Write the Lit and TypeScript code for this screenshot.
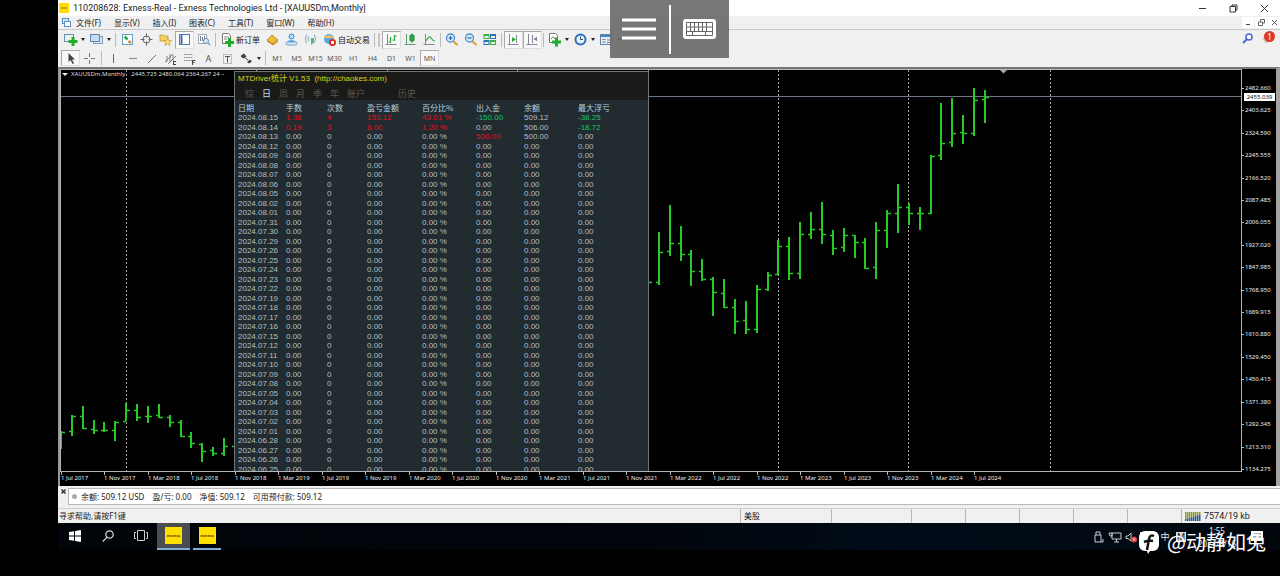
import { LitElement, html, svg, css } from "lit";
import { customElement } from "lit/decorators.js";
import { classMap } from "lit/directives/class-map.js";

type Icon = ReturnType<typeof svg>;

const GREEN = "#2fa84a";

const glyph: Record<string, Icon> = {
  newChart: svg`<rect x="1.500" y="2.500" width="9" height="7" fill="#e8f2e8" stroke="#6a8fb0"/><path d="M10 5v9M5.500 9.500h9" stroke="#1eae2c" stroke-width="3"/>`,
  profiles: svg`<rect x="4.500" y="4.500" width="9" height="7" fill="#dbe9f7" stroke="#7f9fbe"/><rect x="1.500" y="2.500" width="9" height="7" fill="#c5dcf2" stroke="#5d8ab5"/>`,
  market: svg`<rect x="2.500" y="2.500" width="10" height="10" fill="#fff" stroke="#6aa0cc"/><path d="M4.500 4.500l3 3" stroke="#2fa84a" stroke-width="2.500"/><path d="M8.500 9l2.500 2" stroke="#e08a2c" stroke-width="2.500"/>`,
  target: svg`<circle cx="7.500" cy="7.500" r="3.500" fill="none" stroke="#666"/><path d="M7.500 1.500v4M7.500 9.500v4M1.500 7.500h4M9.500 7.500h4" stroke="#666"/>`,
  folders: svg`<path d="M2 3h3l1 1h4v5H2z" fill="#f5d55a" stroke="#b99a3a" stroke-width=".8"/><path d="M9.500 6l1.200 2.400 2.800.3-2 1.900.5 2.700-2.500-1.300-2.500 1.300.5-2.700-2-1.900 2.800-.3z" fill="#ffe168" stroke="#c09530" stroke-width=".7"/>`,
  navigator: svg`<rect x="2.500" y="2.500" width="10" height="10" fill="#fff" stroke="#4f7db8"/><path d="M4.500 3v9" stroke="#3a6cae" stroke-width="2"/>`,
  tester: svg`<rect x="2.500" y="2.500" width="8" height="9" fill="#fff" stroke="#9ab"/><path d="M4.500 4v5M6.500 5v4M8.500 4v4" stroke="#778"/><circle cx="10" cy="9" r="2.500" fill="#d8ecf8" stroke="#6d95b5"/><path d="M12 11l2 2" stroke="#6d95b5" stroke-width="1.500"/>`,
  order: svg`<path d="M2.500 1.500h6l2 2v8h-8z" fill="#fff" stroke="#777"/><path d="M4 5h5M4 7h3" stroke="#888"/><path d="M9.500 6v9M5 10.500h9" stroke="#1eae2c" stroke-width="3"/>`,
  gold: svg`<path d="M2 8l5-5 6 5-5 4z" fill="#efbd3a" stroke="#b5811c" stroke-width=".8"/><path d="M2 8v1.500l6 4V12zM8 12l5-4v1.500l-5 4z" fill="#c58d20"/>`,
  cloud: svg`<circle cx="7.500" cy="4.500" r="2.500" fill="#b9e0ff" stroke="#2a8ad6"/><path d="M3 11c0-4 9-4 9 0z" fill="#58aef0"/><rect x="2" y="10" width="11" height="3" rx="1.500" fill="#dceaf6" stroke="#5a8cc0" stroke-width=".8"/>`,
  signal: svg`<path d="M4 3a6 6 0 0 0 0 8M11 3a6 6 0 0 1 0 8M6 5a3 3 0 0 0 0 4" fill="none" stroke="#86b7d4" stroke-width="1.200"/><path d="M8 6v7q4-2 3-7z" fill="#62b56c"/>`,
  auto: svg`<circle cx="7" cy="7" r="5" fill="#5aa9df"/><path d="M2 6q5-6 10 0z" fill="#efc35a"/><circle cx="10.500" cy="10.500" r="3.500" fill="#d9281d"/><rect x="9" y="9" width="3" height="3" fill="#fff"/>`,
  bars: svg`<path d="M3.500 2v11M1.500 12.500h11" stroke="#889" /><path d="M6.500 5v6M6.500 10h-2M10.500 3v6M10.500 4h2M10.500 8h-2" stroke="${GREEN}" stroke-width="1.200"/>`,
  candles: svg`<path d="M3.500 2v11M1.500 12.500h11M9 1v10" stroke="#697"/><rect x="7" y="3" width="4" height="6" rx="1" fill="#22b344" stroke="#187d30"/>`,
  line: svg`<path d="M3.500 2v11M1.500 12.500h11" stroke="#889"/><path d="M4 9q3-6 5-3t4 3" fill="none" stroke="${GREEN}" stroke-width="1.200"/>`,
  zoomIn: svg`<path d="M9 9l4.500 4" stroke="#d8a630" stroke-width="2.200"/><circle cx="6.500" cy="6" r="4" fill="#d6ecfb" stroke="#4e90c8" stroke-width="1.300"/><path d="M4.500 6h4M6.500 4v4" stroke="#2767a5" stroke-width="1.200"/>`,
  zoomOut: svg`<path d="M9 9l4.500 4" stroke="#d8a630" stroke-width="2.200"/><circle cx="6.500" cy="6" r="4" fill="#d6ecfb" stroke="#4e90c8" stroke-width="1.300"/><path d="M4.500 6h4" stroke="#2767a5" stroke-width="1.200"/>`,
  tile: svg`<rect x="1.500" y="2" width="6" height="5" fill="#3fae49"/><rect x="8" y="2" width="6" height="5" fill="#2f6cc4"/><rect x="1.500" y="8" width="6" height="5" fill="#2f6cc4"/><rect x="8" y="8" width="6" height="5" fill="#3fae49"/><path d="M2.500 5h4M9 5h4M2.500 11h4M9 11h4" stroke="#e8f4d8" stroke-width="2"/>`,
  scroll: svg`<path d="M3.500 2v11M1.500 12.500h11" stroke="#889"/><path d="M10.500 3v8" stroke="#889"/><path d="M6 5l4 2.500L6 10z" fill="#27ab3d"/>`,
  shift: svg`<path d="M3.500 2v11M1.500 12.500h11M7.500 3v8" stroke="#889"/><path d="M12 5L8.500 7 12 9z" fill="#778"/>`,
  indicator: svg`<path d="M2.500 1.500h6l2 2v7h-8z" fill="#fff" stroke="#777"/><path d="M4 7q2-4 4 0" fill="none" stroke="#777"/><path d="M9.500 5.500v9M5 10h9" stroke="#1eae2c" stroke-width="3"/>`,
  clock: svg`<circle cx="7.500" cy="7.500" r="5" fill="#e4f1fc" stroke="#2d6dba" stroke-width="2"/><path d="M7.500 4.500v3h2.500" fill="none" stroke="#345"/>`,
  template: svg`<rect x="1.500" y="2.500" width="11" height="10" fill="#e4edf4" stroke="#5d86a8"/><path d="M2 4h10" stroke="#4684c4" stroke-width="2"/><path d="M3.500 7.500h3M3.500 10h3M8 8h3.500M8 10.500h3" stroke="#779"/>`,
  cursor: svg`<path d="M5.500 2v9l2-2 2 4 1.500-.8-2-3.700h3z" fill="#444"/>`,
  cross: svg`<path d="M7.500 2v4M7.500 9v4M2 7.500h4M9 7.500h4" stroke="#777"/>`,
  vline: svg`<path d="M7.500 3v9" stroke="#666"/>`,
  hline: svg`<path d="M4 7.500h8" stroke="#888"/>`,
  trend: svg`<path d="M4 12l8-8" stroke="#777"/>`,
  channel: svg`<path d="M2 11l8-8M5 13l8-8M4 5v6M7 3v8M10 4v6" stroke="#777" stroke-width=".9"/><path d="M10 10.500h3M10 13.500h3M10.500 10v4" stroke="#444"/>`,
  fibo: svg`<path d="M2 3.500h9M2 6.500h9M2 9.500h9" stroke="#888" stroke-dasharray="1.500 .7"/><path d="M10.500 9v5M10.500 9.500h3M10.500 11.500h2" stroke="#444"/>`,
  label: svg`<rect x="3.500" y="3.500" width="8" height="9" fill="none" stroke="#888" stroke-dasharray="1 1"/><path d="M5 5.500h5M7.500 5.500v6" stroke="#555"/>`,
  arrows: svg`<path d="M2 5l3-2 2 2.500-3 1.500zM5 6l4 3" fill="#444" stroke="#444"/><path d="M8 11l3-2.500 2 2-3 2z" fill="#444"/>`,
};

const icon = (name: string) =>
  html`<svg class="ico" viewBox="0 0 15 15" aria-hidden="true">${glyph[name]}</svg>`;

/* Each bar: [index, high, low, open, close] in plot pixels. */
const BARS: number[][] = [
  [0, 431, 449, 432, 432], [1, 415, 436, 431, 416], [2, 406, 429, 416, 428], [3, 420, 434, 429, 430],
  [4, 422, 432, 430, 430], [5, 421, 441, 430, 422], [6, 403, 421, 421, 410], [7, 404, 421, 410, 417],
  [8, 406, 423, 416, 416], [9, 404, 418, 415, 417], [10, 415, 427, 417, 422], [11, 420, 437, 422, 436],
  [12, 432, 448, 436, 443], [13, 443, 462, 444, 451], [14, 447, 456, 450, 453], [15, 438, 456, 453, 446],
  [16, 440, 452, 446, 446], [54, 270, 284, 281, 282], [55, 232, 285, 282, 252], [56, 205, 256, 251, 243],
  [57, 226, 261, 243, 254], [58, 250, 286, 254, 271], [59, 259, 281, 271, 279], [60, 277, 316, 279, 292],
  [61, 279, 308, 293, 307], [62, 299, 334, 307, 321], [63, 301, 334, 320, 329], [64, 285, 333, 329, 289],
  [65, 272, 291, 289, 275], [66, 240, 275, 274, 246], [67, 237, 280, 246, 273], [68, 222, 279, 273, 234],
  [69, 212, 239, 234, 229], [70, 202, 244, 229, 234], [71, 230, 255, 235, 248], [72, 228, 252, 247, 235],
  [73, 235, 258, 235, 242], [74, 238, 269, 242, 268], [75, 222, 279, 267, 230], [76, 210, 248, 230, 213],
  [77, 184, 233, 213, 207], [78, 203, 225, 207, 213], [79, 207, 230, 213, 213], [80, 155, 214, 213, 156],
  [81, 103, 160, 155, 143], [82, 98, 147, 142, 133], [83, 115, 144, 132, 133], [84, 88, 136, 133, 100],
  [85, 90, 123, 99, 97],
];
const barX = (i: number) => Math.round(i * 10.87);
const PLOT_TOP = 70;

const PRICES = ["2482.660", "2403.625", "2324.590", "2245.555", "2166.520", "2087.485", "2006.055", "1927.020", "1847.985",
  "1768.950", "1689.915", "1610.880", "1529.450", "1450.415", "1371.380", "1292.345", "1213.310", "1134.275"];

const MONTHS = ["Jul", "Nov", "Mar"];
const DATES = Array.from({ length: 22 }, (_, i) => `1 ${MONTHS[i % 3]} ${2017 + Math.floor((i + 1) / 3)}`);

const DAYS = ("08.15 08.14 08.13 08.12 08.09 08.08 08.07 08.06 08.05 08.02 08.01 07.31 07.30 07.29 07.26 07.25 07.24 07.23 " +
  "07.22 07.19 07.18 07.17 07.16 07.15 07.12 07.11 07.10 07.09 07.08 07.05 07.04 07.03 07.02 07.01 06.28 06.27 06.26 06.25").split(" ");
const ACTIVE: Record<string, string[]> = {
  "08.15": ["1.36", "4", "153.12", "43.01 %", "-150.00", "509.12", "-38.25"],
  "08.14": ["0.19", "3", "6.00", "1.20 %", "0.00", "506.00", "-18.72"],
  "08.13": ["0.00", "0", "0.00", "0.00 %", "500.00", "500.00", "0.00"],
};
const IDLE = ["0.00", "0", "0.00", "0.00 %", "0.00", "0.00", "0.00"];
const tone = (value: string, col: number) => ({
  loss: value.startsWith("-"),
  gain: !value.startsWith("-") && parseFloat(value) !== 0 && col !== 5,
});

@customElement("stats-panel")
export class StatsPanel extends LitElement {
  static styles = css`
    :host { display: block; background: #212b30; border: 1px solid #6d777b; border-bottom: 0; overflow: hidden; box-sizing: border-box;
      font: 8px/9px "Liberation Sans", "Noto Sans CJK SC", sans-serif; color: #b4bfc4; }
    .head { background: #1a1b18; height: 28px; }
    .title { margin: 0; padding: 2px 3px 0; font: inherit; line-height: 10px; color: #d3d31c; }
    .tabs { display: flex; gap: 8px; padding: 5px 10px 0; }
    .tab { border: 0; padding: 0; background: none; font: 9px/10px "Noto Sans CJK SC", sans-serif; color: #55574f; }
    .on { color: #b8dcf0; }
    .history { margin-left: 25px; }
    table { width: 413px; table-layout: fixed; border-collapse: collapse; margin-top: 3px; }
    th, td { box-sizing: border-box; padding: 0 0 0 3px; text-align: left; font-weight: 400; white-space: nowrap; }
    th { height: 10px; font: 8px/10px "Noto Sans CJK SC", sans-serif; color: #b5cfdc; }
    td { height: 9px; line-height: 9px; }
    tbody tr:nth-child(even) td { height: 10px; }
    .gain { color: #e0101c; }
    .loss { color: #12c765; }
    .c1 { width: 48px; } .c2 { width: 41px; } .c3 { width: 40px; } .c4 { width: 55px; }
    .c5 { width: 54px; } .c6 { width: 48px; } .c7 { width: 54px; }
  `;
  render() {
    const tabs = ["综", "日", "周", "月", "季", "年", "账户", "历史"];
    const heads = ["日期", "手数", "次数", "盈亏金额", "百分比%", "出入金", "余额", "最大浮亏"];
    return html`
      <div class="head">
        <h2 class="title">MTDriver统计 V1.53&nbsp; (http://chaokes.com)</h2>
        <div class="tabs">
          ${tabs.map((t, i) => html`<button class=${classMap({ tab: true, on: i === 1, history: i === 7 })}>${t}</button>`)}
        </div>
      </div>
      <table>
        <thead><tr>${heads.map((h, i) => html`<th scope="col" class="c${i + 1}">${h}</th>`)}</tr></thead>
        <tbody>
          ${DAYS.map((d) => html`<tr><td>2024.${d}</td>${(ACTIVE[d] ?? IDLE).map((v, i) => html`<td class=${classMap(tone(v, i))}>${v}</td>`)}</tr>`)}
        </tbody>
      </table>`;
  }
}

@customElement("price-chart")
export class PriceChart extends LitElement {
  static styles = css`
    :host { display: grid; grid-template-columns: 1fr 34px; grid-template-rows: 403px 14px; position: relative;
      background: #000; color: #ddd; font: 6px/9px "Noto Sans", sans-serif;
      border: solid #777; border-width: 2px 4px 0 2px; border-right-color: #a2a2a2; border-left-color: #999; }
    .plot { position: relative; min-width: 0; overflow: hidden; border: 1px solid #b4b4b4; }
    .canvas { display: block; width: 100%; height: 401px; }
    .caption { position: absolute; left: 1px; top: 0; display: flex; gap: 3px; align-items: center; white-space: nowrap; }
    .tri { width: 0; border: 3px solid transparent; border-top-color: #eee; border-bottom: 0; }
    .caption b { font-weight: 400; margin-right: 3px; }
    .panel { position: absolute; left: 173px; top: 1px; width: 415px; height: 400px; }
    .time { grid-column: 1; width: 100%; height: 14px; overflow: visible; }
    .time text { fill: #eee; }
    .prices { grid-column: 2; grid-row: 1 / 3; display: flex; flex-direction: column; justify-content: space-between;
      padding: 15px 0 12px; color: #eee; }
    .price { display: flex; align-items: center; gap: 1px; }
    .price::before { content: ""; width: 2px; height: 1px; background: #bbb; }
    .now { position: absolute; right: 1px; top: 24px; width: 31px; line-height: 8px; text-align: center; background: #fff; color: #111; }
  `;
  render() {
    return html`
      <div class="plot">
        <svg class="canvas" role="img" aria-label="XAUUSDm monthly bars">
          ${[65, 195, 326, 456, 587, 717, 847, 989].map((x) => svg`<line x1=${x + 0.5} x2=${x + 0.5} y1="0" y2="401" stroke="#aaa" stroke-dasharray="2 2"/>`)}
          <line x1="0" x2="100%" y1="26.5" y2="26.5" stroke="#6f7786"/>
          <path d="M939 0h7l-3.500 3.500z" fill="#aaa"/>
          ${BARS.map(([i, h, l, o, c]) => {
            const x = barX(i);
            return svg`<path d="M${x} ${h - PLOT_TOP}V${l - PLOT_TOP}" stroke="#28c828" stroke-width="2"/><path d="M${x - 3} ${o - PLOT_TOP + 0.5}H${x}M${x} ${c - PLOT_TOP + 0.5}H${x + 4}" stroke="#28c828" stroke-width="1.500"/>`;
          })}
        </svg>
        <div class="caption"><span class="tri"></span><b>XAUUSDm,Monthly</b><span>2445.725 2480.064 2364.267 24 –</span></div>
        <stats-panel class="panel"></stats-panel>
      </div>
      <svg class="time">
        ${DATES.map((d, i) => {
          const x = barX(i * 4);
          return svg`<line x1=${x + 1.5} x2=${x + 1.5} y1="0" y2="3" stroke="#bbb"/><text x=${x + 1} y="8">${d}</text>`;
        })}
      </svg>
      <div class="prices">${PRICES.map((p) => html`<span class="price">${p}</span>`)}</div>
      <span class="now">2455.039</span>`;
  }
}

@customElement("app-root")
export class AppRoot extends LitElement {
  static styles = css`
    :host { display: block; min-height: 100vh; box-sizing: border-box; padding-left: 58px; background: #000; overflow: hidden;
      position: relative; color: #222; font: 9px/12px "Noto Sans", "Noto Sans CJK SC", sans-serif; }
    button { border: 0; padding: 0; margin: 0; background: none; font: inherit; color: inherit; }
    .ico { width: 15px; height: 15px; flex: none; }
    .bar { display: flex; align-items: center; background: #f0f0f0; white-space: nowrap; }
    .grow { flex: 1; }
    .title { height: 16px; background: #fff; gap: 4px; padding-left: 1px; font: 9px/14px Roboto, "Noto Sans", sans-serif; }
    .logo { width: 10px; height: 10px; }
    .caption { display: flex; }
    .caption button { width: 31px; height: 14px; display: grid; place-items: center; }
    .menu { height: 13px; gap: 13px; padding-left: 3px; border-bottom: 1px solid #c8c8c8; font: 8px/12px "Noto Sans", "Noto Sans CJK SC", sans-serif; }
    .menu .ico { width: 11px; height: 11px; margin-right: -9px; }
    .menu .item { line-height: 12px; }
    .mdi { display: flex; gap: 1px; }
    .mdi button { width: 12px; height: 11px; background: #fff; display: grid; place-items: center; }
    .tools { height: 19px; padding-left: 3px; }
    .draw { height: 18px; padding-left: 3px; }
    .tool { width: 19px; height: 18px; display: grid; place-items: center; box-sizing: border-box; }
    .draw .tool { height: 16px; font: 7px/9px "Noto Sans", sans-serif; color: #555; }
    .draw .letter { font-size: 9px; }
    .pressed { background: #f8f8f8; border: 1px solid; border-color: #aaa #ddd #ddd #aaa; }
    .drop { width: 26px; display: flex; align-items: center; justify-content: space-between; padding: 0 2px; box-sizing: border-box; }
    .drop::after { content: ""; border: 2px solid transparent; border-top: 3px solid #222; border-bottom: 0; }
    .wide { display: flex; align-items: center; gap: 1px; font: 8px/12px "Noto Sans CJK SC", sans-serif; color: #111; }
    .order { width: 45px; padding-left: 2px; }
    .auto { width: 54px; padding-left: 2px; }
    .sep { width: 5px; height: 14px; display: grid; place-items: center; }
    .sep::before { content: ""; width: 1px; height: 14px; background: #bbb; }
    .thin { width: 3px; }
    .handle { width: 8px; height: 14px; border-left: 1px solid #bbb; box-sizing: border-box; }
    .handle::after { content: ""; display: block; margin-left: 3px; width: 2px; height: 14px; border: solid #c4c4c4; border-width: 0 1px; box-sizing: border-box; }
    .right { display: flex; gap: 4px; padding-right: 3px; }
    .alert { position: relative; width: 18px; height: 15px; }
    .badge { position: absolute; right: 2px; top: 0; width: 11px; height: 11px; border-radius: 6px; background: #dc3a26; color: #fff; font-size: 8px; line-height: 11px; text-align: center; }
    .term { height: 22px; align-items: stretch; font-size: 8px; }
    .close { width: 10px; display: flex; flex-direction: column; align-items: center; padding-top: 3px; box-sizing: border-box; }
    .close svg { display: block; }
    .account { flex: 1; display: flex; align-items: center; gap: 8px; margin: 2px 0 3px; padding-left: 3px; background: #fff; border: solid #b8b8b8; border-width: 1px 0 1px 1px; }
    .dot { width: 5px; height: 5px; margin-right: -4px; border-radius: 3px; background: #aaa; }
    .status { height: 14px; border-top: 1px solid #d0d0d0; align-items: stretch; }
    .cell { border-left: 1px solid #b8b8b8; padding-left: 3px; box-sizing: border-box; line-height: 14px; }
    .first { flex: 1; padding-left: 1px; border: 0; line-height: 14px; font-size: 8px; }
    .w91 { width: 91px; font-size: 8px; } .w80 { width: 80px; } .w54 { width: 54px; }
    .net { width: 99px; display: flex; align-items: center; gap: 3px; font-family: Roboto, sans-serif; }
    .task { display: flex; align-items: stretch; height: 27px; background: linear-gradient(90deg, #010409, #01060c 50%, #000b18 68%, #010a14 85%, #02060c); color: #eee; }
    .task button { width: 33px; display: grid; place-items: center; box-sizing: border-box; border-bottom: 2px solid transparent; }
    .task .app { border-bottom-color: #78aedb; }
    .task .current { background: #4b4d50; }
    .task .second { width: 28px; margin-left: 3px; }
    .exness { width: 17px; height: 17px; background: #ffdf00; color: #554a00; display: grid; place-items: center; font: 700 4px/5px "Noto Sans", sans-serif; }
    .tray { display: flex; align-items: center; gap: 2px; padding-right: 16px; }
    .tray .ico { width: 14px; height: 14px; }
    .ime { width: 18px; text-align: center; }
    .m { background: #ddd; color: #111; width: 10px; line-height: 10px; text-align: center; margin-right: 6px; }
    .when { text-align: center; font-size: 8px; line-height: 13px; width: 46px; margin-right: 8px; }
    .remote { position: absolute; left: 610px; top: 0; width: 119px; height: 58px; display: flex; align-items: center; background: rgba(104, 104, 104, .9); }
    .remote button { flex: 1; height: 58px; display: grid; place-items: center; }
    .remote .split { width: 2px; height: 49px; background: #fff; }
    .mark { position: absolute; right: 14px; top: 530px; display: flex; align-items: center; gap: 8px; color: #fff; font: 20px/24px "Noto Sans CJK SC", sans-serif; }
  `;

  private tool(name: string, label: string, extra = "") {
    return html`<button class="tool ${extra}" title=${label}>${icon(name)}</button>`;
  }

  private drop(name: string, label: string) {
    return html`<button class="drop" title=${label}>${icon(name)}</button>`;
  }

  render() {
    const menus = ["文件(F)", "显示(V)", "插入(I)", "图表(C)", "工具(T)", "窗口(W)", "帮助(H)"];
    const frames = ["M1", "M5", "M15", "M30", "H1", "H4", "D1", "W1", "MN"];
    const sep = html`<span class="sep"></span>`;
    const thin = html`<span class="sep thin"></span>`;
    return html`
      <header class="bar title">
        <svg class="logo" viewBox="0 0 10 10"><rect width="10" height="10" fill="#ffdb0a"/><path d="M2 5h6" stroke="#8a7600"/></svg>
        <span class="grow">110208628: Exness-Real - Exness Technologies Ltd - [XAUUSDm,Monthly]</span>
        <div class="caption">
          <button aria-label="最小化"><svg width="9" height="9"><path d="M1 4.500h7" stroke="#333"/></svg></button>
          <button aria-label="还原"><svg width="9" height="9"><path d="M1 2.500h5.500V8H1zM3 2.500V1h5v5H6.500" fill="none" stroke="#333"/></svg></button>
          <button aria-label="关闭"><svg width="9" height="9"><path d="M1 1l7 7M8 1L1 8" stroke="#333"/></svg></button>
        </div>
      </header>
      <nav class="bar menu">
        <svg class="ico" viewBox="0 0 11 11"><rect x="1.500" y="1.500" width="6" height="5" fill="#cfe4f8" stroke="#5b8fc2"/><rect x="3.500" y="4.500" width="6" height="5" fill="#fff" stroke="#5b8fc2"/></svg>
        ${menus.map((m) => html`<button class="item">${m}</button>`)}
        <span class="grow"></span>
        <div class="mdi">
          <button aria-label="最小化图表"><svg width="7" height="7"><path d="M1 5.500h4" stroke="#444"/></svg></button>
          <button aria-label="还原图表"><svg width="7" height="7"><path d="M.5 3h4v3.500h-4zM2.500 3V.5h4V4h-2" fill="none" stroke="#666"/></svg></button>
          <button aria-label="关闭图表"><svg width="7" height="7"><path d="M1 1l5 5M6 1L1 6" stroke="#555"/></svg></button>
        </div>
      </nav>
      <div class="bar tools">
        ${this.drop("newChart", "新图表")}${this.drop("profiles", "配置")}${sep}
        ${this.tool("market", "市场报价")}${this.tool("target", "数据窗口")}${this.tool("folders", "导航")}
        ${this.tool("navigator", "终端", "pressed")}${this.tool("tester", "策略测试")}${sep}
        <button class="wide order">${icon("order")}新订单</button>
        ${this.tool("gold", "编辑器")}${this.tool("cloud", "社区")}${this.tool("signal", "信号")}
        <button class="wide auto">${icon("auto")}自动交易</button>
        <span class="handle"></span>
        ${this.tool("bars", "柱状图", "pressed")}${this.tool("candles", "阴阳烛")}${this.tool("line", "折线图")}${thin}
        ${this.tool("zoomIn", "放大")}${this.tool("zoomOut", "缩小")}${this.tool("tile", "平铺")}${sep}
        ${this.tool("scroll", "自动滚动", "pressed")}${this.tool("shift", "图表平移", "pressed")}${thin}
        ${this.drop("indicator", "指标")}${this.drop("clock", "时间周期")}${this.drop("template", "模板")}
        <span class="grow"></span>
        <div class="right">
          <button aria-label="搜索"><svg class="ico" viewBox="0 0 15 15"><circle cx="9" cy="6" r="3" fill="#fff" stroke="#4668d0" stroke-width="1.500"/><path d="M7 8l-4 4" stroke="#4668d0" stroke-width="2"/></svg></button>
          <button class="alert" aria-label="通知"><svg class="ico" viewBox="0 0 15 15"><path d="M1 7l6-3v8H4z" fill="#d2d2d2"/></svg><span class="badge">1</span></button>
        </div>
      </div>
      <div class="bar draw">
        ${this.tool("cursor", "光标", "pressed")}${this.tool("cross", "十字准线")}${sep}
        ${this.tool("vline", "垂直线")}${this.tool("hline", "水平线")}${this.tool("trend", "趋势线")}
        ${this.tool("channel", "通道")}${this.tool("fibo", "斐波那契")}
        <button class="tool letter">A</button>${this.tool("label", "标签")}${this.drop("arrows", "箭头")}${sep}
        ${frames.map((f) => html`<button class=${classMap({ tool: true, pressed: f === "MN" })}>${f}</button>`)}
      </div>
      <price-chart></price-chart>
      <section class="bar term">
        <div class="close"><button aria-label="关闭终端"><svg width="5" height="5"><path d="M.5 .5l4 4M4.500 .5l-4 4" stroke="#222" stroke-width="1.300"/></svg></button></div>
        <div class="account"><i class="dot"></i><span>余额: 509.12 USD</span><span>盈/亏: 0.00</span><span>净值: 509.12</span><span>可用预付款: 509.12</span></div>
      </section>
      <footer class="bar status">
        <span class="first">寻求帮助,请按F1键</span>
        <span class="cell w91">美股</span><span class="cell w80"></span><span class="cell w54"></span><span class="cell w54"></span>
        <span class="cell w54"></span><span class="cell w54"></span><span class="cell w54"></span>
        <span class="cell net"><svg width="16" height="9" viewBox="0 0 16 9">
          ${[0, 1, 2, 3, 4, 5, 6, 7].map((i) => svg`<rect x=${i * 2} y="0" width="1.500" height=${7 - i * 0.6} fill="#8a9a2c"/><rect x=${i * 2} y=${7 - i * 0.6} width="1.500" height=${2 + i * 0.6} fill="#1f5d9c"/>`)}
        </svg>7574/19 kb</span>
      </footer>
      <div class="task">
        <button aria-label="开始"><svg width="12" height="12"><path d="M0 2l5-.8V5.600H0zM6 1l6-1v5.600H6zM0 6.400h5v4.400L0 10zM6 6.400h6V12l-6-1z" fill="#fff"/></svg></button>
        <button aria-label="搜索"><svg width="12" height="12"><circle cx="7.500" cy="4.500" r="3.700" fill="none" stroke="#ddd" stroke-width="1.200"/><path d="M5 7.200L.8 11.500" stroke="#ddd" stroke-width="1.200"/></svg></button>
        <button aria-label="任务视图"><svg width="14" height="11"><path d="M3.500 .5h7v10h-7zM2 2.500H.5v6H2M12 2.500h1.500v6H12" fill="none" stroke="#ccc"/></svg></button>
        <button class="app current"><span class="exness">exness</span></button>
        <button class="app second"><span class="exness">exness</span></button>
        <span class="grow"></span>
        <div class="tray">
          <svg class="ico" viewBox="0 0 14 14"><path d="M4 5V2h4v3M3 5h6v7H3zM9 12h2V9" fill="none" stroke="#ccc"/></svg>
          <svg class="ico" viewBox="0 0 14 14"><path d="M4 3h9v6H4zM6 12h5M8.500 9v3M1 3h3v3H2z" fill="none" stroke="#ccc"/></svg>
          <svg class="ico" viewBox="0 0 14 14"><path d="M2 6h2l3-3v8L4 8.500H2z" fill="none" stroke="#ccc"/><circle cx="10" cy="9.500" r="3" fill="#dd3b3b"/><path d="M9 8.500l2 2M11 8.500l-2 2" stroke="#fff"/></svg>
          <svg class="ico" viewBox="0 0 14 14"><rect x=".5" y="2.500" width="13" height="8" fill="none" stroke="#ccc"/><path d="M3 5h9M3 7.500h9" stroke="#999" stroke-dasharray="1 1"/></svg>
          <span class="ime">中</span><span class="m">M</span>
          <time class="when">1:55<br>2024/8/16</time>
          <svg class="ico" viewBox="0 0 14 14"><path d="M1 1h12v10H7l-3 2v-2H1z" fill="#fff"/><path d="M3 4h8M3 7h8" stroke="#556"/></svg>
        </div>
      </div>
      <div class="remote">
        <button aria-label="菜单"><svg width="34" height="22"><path d="M0 2h34M0 11h34M0 20h34" stroke="#fff" stroke-width="3"/></svg></button>
        <span class="split"></span>
        <button aria-label="键盘"><svg width="33" height="20"><rect width="33" height="20" rx="3" fill="#fff"/><path d="M3.500 3.500h26v13h-26zM3.500 8h26M3.500 12.500h26M7.500 3.500v9M11.500 3.500v9M15.500 3.500v9M19.500 3.500v9M23.500 3.500v9M9.500 12.500v4M22.500 12.500v4" fill="none" stroke="#666"/></svg></button>
      </div>
      <div class="mark">
        <svg width="20" height="23" viewBox="0 0 20 23"><path d="M6 0h8a6 6 0 0 1 6 6v8a6 6 0 0 1-6 6h-3l-2 3-1-3H6a6 6 0 0 1-6-6V6a6 6 0 0 1 6-6z" fill="#fff"/><path d="M15 5q-4-2-5 3L8 19M5 11q5-2 9-1" fill="none" stroke="#111" stroke-width="2.500"/></svg>
        <span>@动静如兔</span>
      </div>`;
  }
}
